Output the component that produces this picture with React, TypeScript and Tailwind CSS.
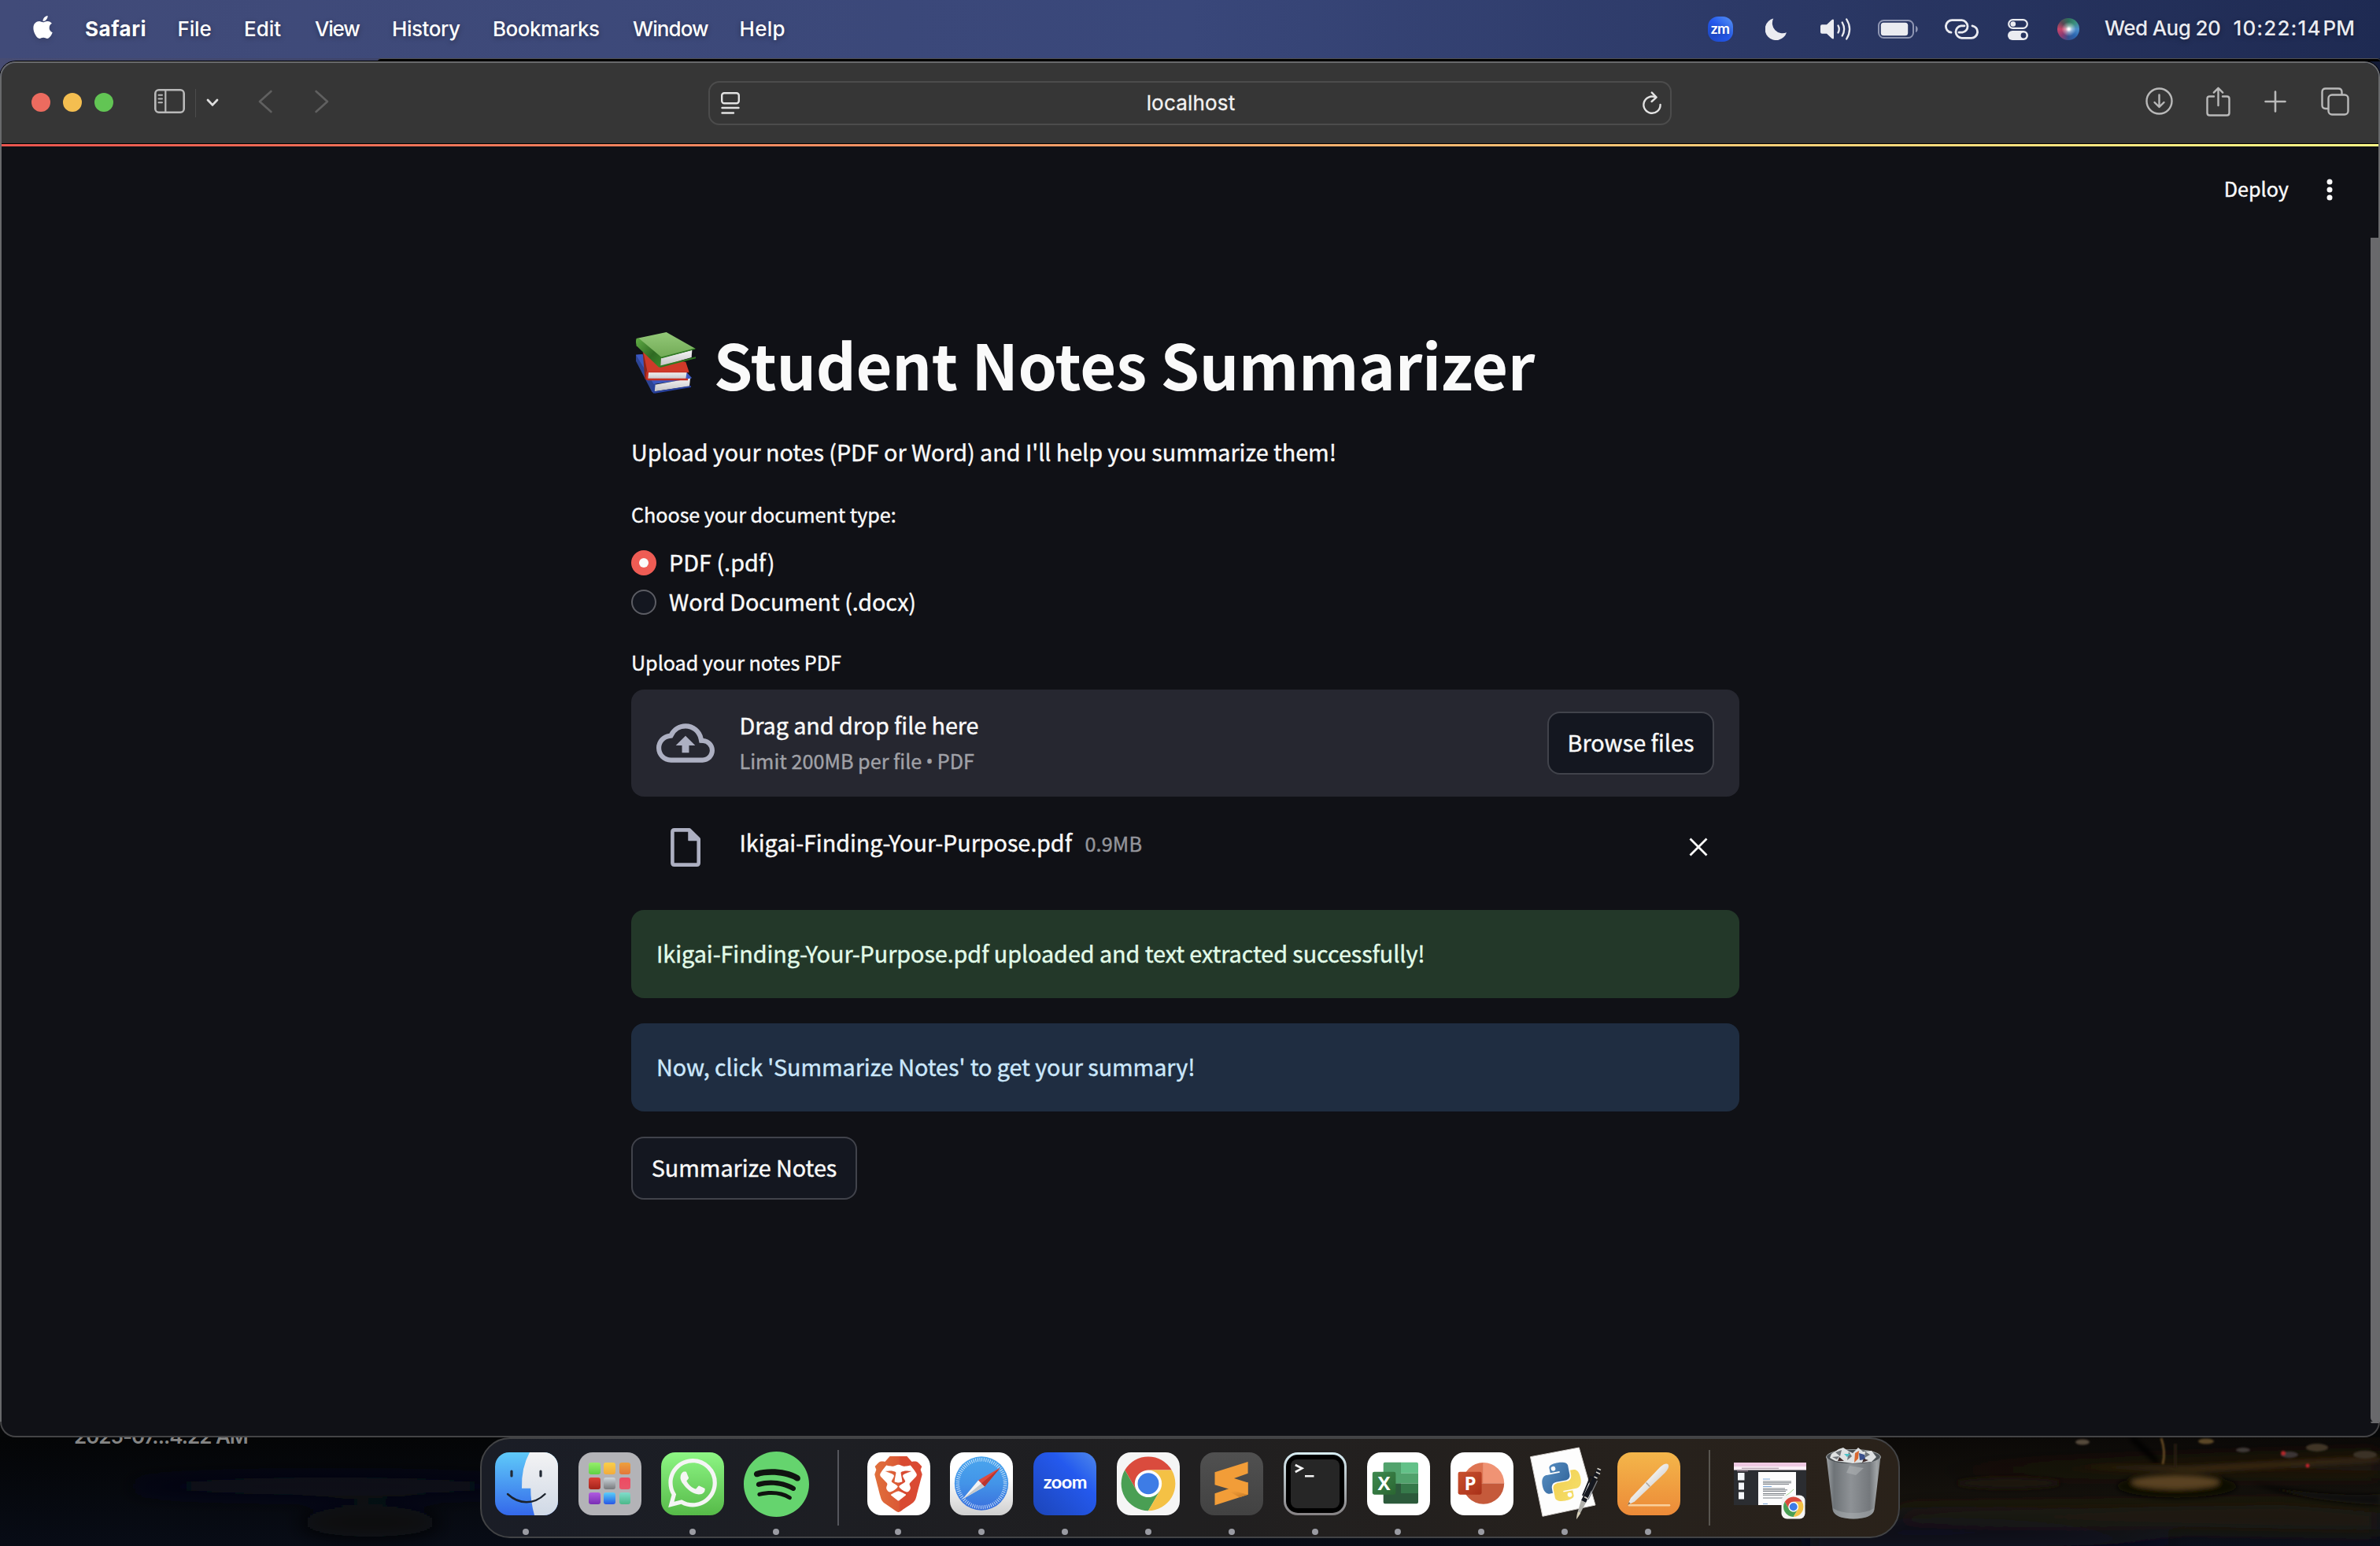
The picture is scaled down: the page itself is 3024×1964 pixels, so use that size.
import React from "react";
import { FaApple } from "react-icons/fa";
import { SiBrave, SiSpotify, SiWhatsapp } from "react-icons/si";

/* ---------- Menu bar ---------- */

const menus = [
  { label: "File", cls: "w-[84.5px] tracking-[-0.14px]" },
  { label: "Edit", cls: "w-[90px]" },
  { label: "View", cls: "w-[98px] tracking-[-1.2px]" },
  { label: "History", cls: "w-[128px] tracking-[-0.45px]" },
  { label: "Bookmarks", cls: "w-[178px] tracking-[-0.48px]" },
  { label: "Window", cls: "w-[135.5px] tracking-[-0.9px]" },
  { label: "Help", cls: "tracking-[0.27px]" },
];

function MenuBar() {
  return (
    <div className="flex h-[74px] shrink-0 items-center bg-linear-to-r from-[#414b79] via-[#39477a] to-[#1e2a52] pr-8 text-[26px] font-medium text-white [text-shadow:0_2px_6px_rgba(0,0,0,0.35)]">
      <FaApple className="ml-[39px] mt-[-5px] h-[33px] w-[31px] drop-shadow-md" />
      <div className="ml-[38px] mt-[-1px] flex">
        <span className="w-[117.5px] font-bold tracking-[0.53px]">Safari</span>
        {menus.map((m) => (
          <span key={m.label} className={m.cls}>
            {m.label}
          </span>
        ))}
      </div>
      <div className="ml-auto flex items-center whitespace-nowrap text-[#ebecf1]">
        <div className="flex h-8 w-8 items-center justify-center rounded-[13px] bg-linear-to-bl from-[#5a92f2] via-[#2559ee] to-[#1d49c4] font-['Lato'] text-[19px] font-bold leading-none tracking-[-0.5px] text-white">
          <span className="mt-[-4px]">zm</span>
        </div>
        <svg className="ml-[41px]" width="27" height="28" viewBox="0 0 27 28">
          <path d="M10.2 0.5A14 14 0 1 0 27 18.2A13 13 0 0 1 10.2 0.5Z" fill="currentColor" />
        </svg>
        <svg className="ml-[43px]" width="39" height="28" viewBox="0 0 39 28" fill="none">
          <path d="M2 8.2H8L14.4 2.2Q17 0.4 17 3V25Q17 27.6 14.4 25.8L8 19.8H2Q0 19.8 0 17.8V10.2Q0 8.2 2 8.2Z" fill="currentColor" />
          <g stroke="currentColor" strokeWidth="2.3" strokeLinecap="round">
            <path d="M22.5 9.5Q25 14 22.5 18.5" />
            <path d="M27.7 5.5Q32.6 14 27.7 22.5" />
            <path d="M33.2 1.5Q41 14 33.2 26.5" />
          </g>
        </svg>
        <svg className="ml-[34px]" width="51" height="24" viewBox="0 0 51 24" fill="none">
          <rect x="1" y="1" width="44" height="22" rx="6.5" stroke="#8f96b3" strokeWidth="2" />
          <rect x="3.8" y="3.8" width="34.4" height="16.4" rx="3.5" fill="currentColor" />
          <path d="M48 7.7C51.6 9.3 51.6 14.7 48 16.3Z" fill="#8f96b3" />
        </svg>
        <svg className="ml-[34px]" width="43" height="26" viewBox="0 0 43 26" fill="none" stroke="currentColor" strokeWidth="2.8" strokeLinecap="round">
          <path d="M8 17.2A7.8 7.8 0 0 1 9.5 1.7H21.5A7.8 7.8 0 0 1 22.4 17.2H18" />
          <path d="M35 8.8A7.8 7.8 0 0 1 33.5 24.3H21.5A7.8 7.8 0 0 1 20.6 8.8H25" />
        </svg>
        <svg className="ml-[37px]" width="26" height="27" viewBox="0 0 26 27" fill="none">
          <rect x="1.2" y="1.2" width="23.6" height="10.6" rx="5.3" stroke="currentColor" strokeWidth="2.2" />
          <circle cx="6.8" cy="6.5" r="3.3" fill="currentColor" />
          <rect x="0" y="15" width="26" height="12" rx="6" fill="currentColor" />
          <circle cx="20" cy="21" r="3.4" fill="#26335f" />
        </svg>
        <div className="relative ml-[37px] h-7 w-7 overflow-hidden rounded-full bg-[conic-gradient(from_0deg,#2e6f5c,#3a8f7c,#4b8ecb,#2b66b0,#35508f,#8a3a72,#c9466a,#5d4754,#2e6f5c)]">
          <div className="absolute inset-0 rounded-full bg-[radial-gradient(circle_at_52%_50%,#ffffff_5%,rgba(255,255,255,0.45)_20%,rgba(255,255,255,0)_45%)]" />
        </div>
        <span className="ml-[32.5px] mt-[-3px] w-[163.5px] tracking-[-0.58px]">Wed Aug 20</span>
        <span className="mt-[-3px] tracking-[1.1px]">10:22:14</span>
        <span className="ml-[2px] mt-[-3px] tracking-[0px]">PM</span>
      </div>
    </div>
  );
}

/* ---------- Safari window ---------- */

function Toolbar() {
  return (
    <div className="flex h-[102px] shrink-0 items-center bg-[#363636] text-[#b9b9b9]">
      <div className="ml-[38px] mt-[-2px] flex gap-4">
        <i className="h-6 w-6 rounded-full bg-[#ec6b5f]" />
        <i className="h-6 w-6 rounded-full bg-[#f4be50]" />
        <i className="h-6 w-6 rounded-full bg-[#62c554]" />
      </div>
      <svg className="ml-[52px] mt-[-5px]" width="39" height="31" viewBox="0 0 39 31" fill="none" stroke="currentColor">
        <rect x="1.3" y="1.3" width="36.4" height="28.4" rx="4.5" strokeWidth="2.6" />
        <path d="M14.3 1.5V29.5" strokeWidth="2.2" />
        <path d="M5.5 7.8H10M5.5 12.5H10M5.5 17.2H10" strokeWidth="2" strokeLinecap="round" />
      </svg>
      <div className="ml-[13px] h-9 w-px bg-[#4c4c4c]" />
      <svg className="ml-[13px] mt-[-2px]" width="16" height="11" viewBox="0 0 16 11" fill="none" stroke="#dedede" strokeWidth="2.8" strokeLinecap="round" strokeLinejoin="round">
        <path d="M2 2L8 8.4L14 2" />
      </svg>
      <svg className="ml-[50px] mt-[-4px]" width="18" height="30" viewBox="0 0 18 30" fill="none" stroke="#606060" strokeWidth="2.6" strokeLinecap="round" strokeLinejoin="round">
        <path d="M16.4 2L2 15L16.4 28" />
      </svg>
      <svg className="ml-[54px] mt-[-4px]" width="18" height="30" viewBox="0 0 18 30" fill="none" stroke="#606060" strokeWidth="2.6" strokeLinecap="round" strokeLinejoin="round">
        <path d="M1.6 2L16 15L1.6 28" />
      </svg>
      <div className="ml-[482px] mt-[-1px] flex h-14 w-[1224px] items-center rounded-[14px] border-2 border-[#4c4c4c] pl-[14px] pr-[10px]">
        <svg width="24" height="28" viewBox="0 0 24 28" fill="none" stroke="#e2e2e2" strokeWidth="2.4" strokeLinecap="round">
          <rect x="1.2" y="1.2" width="21.6" height="13" rx="3" />
          <path d="M1.5 20H22.5M1.5 26.5H16" />
        </svg>
        <span className="mx-auto text-[26px] leading-none tracking-[0.18px] text-[#f2f2f2] [-webkit-text-stroke:0.3px]">localhost</span>
        <svg width="26" height="30" viewBox="0 0 26 30" fill="none" stroke="#e2e2e2" strokeWidth="2.4" strokeLinecap="round" strokeLinejoin="round">
          <path d="M17.5 7.6A10.6 10.6 0 1 0 23.6 17" />
          <path d="M12.8 1.6L18.6 7.6L12.6 13" />
        </svg>
      </div>
      <div className="ml-[602px] mt-[-5px] flex items-center">
        <svg width="35" height="35" viewBox="0 0 35 35" fill="none" stroke="currentColor" strokeWidth="2.4" strokeLinecap="round" strokeLinejoin="round">
          <circle cx="17.5" cy="17.5" r="16" />
          <path d="M17.5 9.5V24.5M11.5 19L17.5 25L23.5 19" />
        </svg>
        <svg className="ml-[42px]" width="31" height="38" viewBox="0 0 31 38" fill="none" stroke="currentColor" strokeWidth="2.4" strokeLinecap="round" strokeLinejoin="round">
          <path d="M10 12.5H4.5Q1.5 12.5 1.5 15.5V33.5Q1.5 36.5 4.5 36.5H26.5Q29.5 36.5 29.5 33.5V15.5Q29.5 12.5 26.5 12.5H21" />
          <path d="M15.5 24V2M9.8 7.6L15.5 1.8L21.2 7.6" />
        </svg>
        <svg className="ml-[43px]" width="28" height="28" viewBox="0 0 28 28" fill="none" stroke="currentColor" strokeWidth="2.6" strokeLinecap="round">
          <path d="M14 1.5V26.5M1.5 14H26.5" />
        </svg>
        <svg className="ml-[44px]" width="36" height="36" viewBox="0 0 36 36" fill="none" stroke="currentColor" strokeWidth="2.4" strokeLinejoin="round">
          <rect x="9.5" y="9.5" width="25" height="25" rx="4.5" />
          <path d="M9.5 27H6Q1.5 27 1.5 22.5V6Q1.5 1.5 6 1.5H22Q26.5 1.5 26.5 6V9.5" />
        </svg>
      </div>
    </div>
  );
}

function Books() {
  return (
    <svg className="mt-[1px] ml-[-6px] h-[100px] w-[110px] shrink-0" viewBox="0 0 330 300">
      <defs>
        <linearGradient id="bkGreen" x1="0" y1="0" x2="0" y2="1">
          <stop offset="0" stopColor="#93c878" />
          <stop offset="1" stopColor="#71aa55" />
        </linearGradient>
        <linearGradient id="bkSpine" x1="0" y1="0" x2="1" y2="1">
          <stop offset="0" stopColor="#61ad45" />
          <stop offset="0.6" stopColor="#2f6a22" />
          <stop offset="1" stopColor="#3c8a2c" />
        </linearGradient>
        <linearGradient id="bkPages" x1="0" y1="0" x2="0" y2="1">
          <stop offset="0" stopColor="#f4f4f4" />
          <stop offset="1" stopColor="#c4c4c6" />
        </linearGradient>
      </defs>
      <path d="M36 122L60 120L110 234L105 270L96 262L36 146Z" fill="#2c4494" />
      <path d="M36 122L60 120L230 190L249 210L240 216L104 234Z" fill="#3c58c0" />
      <path d="M108 236L243 212L240 242L106 262Z" fill="url(#bkPages)" />
      <path d="M103 234L110 236L107 262L246 240L246 246L108 269Q98 268 100 256Z" fill="#27409b" />
      <path d="M62 112L72 110L80 180L78 218L70 214Z" fill="#8c251b" />
      <path d="M64 112L226 150L238 186L80 188Z" fill="#cf3a29" />
      <path d="M82 189L230 187L226 214L80 216Z" fill="url(#bkPages)" />
      <path d="M76 186H238V190H84L82 212H234V220H80Q74 218 74 210Z" fill="#c52f22" />
      <path d="M38 60L152 36L262 98L130 134Z" fill="url(#bkGreen)" />
      <path d="M38 60Q34 70 38 88L124 170Q134 170 134 132L48 60Z" fill="url(#bkSpine)" />
      <path d="M132 134L250 104L248 132L130 166Z" fill="url(#bkPages)" />
      <path d="M130 131L262 97V101L134 136ZM126 164L264 130V136L128 171Z" fill="#2f7a22" />
    </svg>
  );
}

function RadioRow({ label, checked, cls }: { label: string; checked?: boolean; cls: string }) {
  return (
    <div className="flex h-[50px] items-center">
      <span
        className={
          checked
            ? "mt-[1px] flex h-8 w-8 items-center justify-center rounded-full bg-[#ee5c54]"
            : "mt-[1px] h-8 w-8 rounded-full border-2 border-[#5c5d64] bg-[#141720]"
        }
      >
        {checked && <span className="h-3 w-3 rounded-full bg-[#fafafa]" />}
      </span>
      <span className={cls}>{label}</span>
    </div>
  );
}

function StreamlitApp() {
  return (
    <div className="relative flex min-h-0 flex-1 flex-col whitespace-nowrap bg-[#101116] font-['Noto_Sans_CJK_SC',sans-serif] text-[28.8px] text-[#fafafa] [-webkit-text-stroke:0.4px]">
      <div className="h-[3px] shrink-0 bg-linear-to-r from-[#ea554f] via-[#f4a76c] to-[#fffb87]" />
      <div className="mt-[33px] flex h-10 items-center justify-end pr-[58px]">
        <span className="text-[25.2px] leading-[40px]">Deploy</span>
        <svg className="ml-[48px] mt-[4px]" width="8" height="28" viewBox="0 0 8 28" fill="currentColor">
          <circle cx="4" cy="4" r="3.5" />
          <circle cx="4" cy="14" r="3.5" />
          <circle cx="4" cy="24" r="3.5" />
        </svg>
      </div>

      <main className="ml-[800px] mt-[150px] flex w-[1408px] flex-col">
        <div className="flex h-[106px]">
          <Books />
          <h1 className="ml-[0.7px] text-[79.3px] font-bold leading-[106px] tracking-[-0.32px] [-webkit-text-stroke:0px]">Student Notes Summarizer</h1>
        </div>
        <p className="mt-[35px] leading-[48px] tracking-[-0.07px]">Upload your notes (PDF or Word) and I'll help you summarize them!</p>
        <p className="mt-[35px] text-[25.2px] leading-[40px] tracking-[-0.06px]">Choose your document type:</p>
        <div className="mt-4 flex flex-col">
          <RadioRow checked label="PDF (.pdf)" cls="ml-4" />
          <RadioRow label="Word Document (.docx)" cls="ml-4 tracking-[-0.12px]" />
        </div>
        <p className="mt-8 text-[25.2px] leading-[40px] tracking-[-0.06px]">Upload your notes PDF</p>

        <div className="mt-[15px] flex h-[136px] items-center rounded-2xl bg-[#262730] px-8">
          <svg className="h-[74px] w-[74px] text-[#adb0c2]" viewBox="0 0 24 24" fill="currentColor">
            <path d="M19.35 10.04A7.49 7.49 0 0 0 12 4C9.11 4 6.6 5.64 5.35 8.04A5.994 5.994 0 0 0 0 14c0 3.31 2.69 6 6 6h13c2.76 0 5-2.24 5-5 0-2.64-2.05-4.78-4.65-4.96zM19 18H6c-2.21 0-4-1.79-4-4 0-2.05 1.53-3.76 3.56-3.97l1.07-.11.5-.95A5.469 5.469 0 0 1 12 6c2.62 0 4.88 1.86 5.39 4.43l.3 1.5 1.53.11A2.98 2.98 0 0 1 22 15c0 1.65-1.35 3-3 3zM8 13h2.55v3h2.9v-3H16l-4-4z" />
          </svg>
          <div className="ml-[31.5px] mt-[-2px] flex flex-col">
            <span className="leading-[46px] tracking-[-0.08px]">Drag and drop file here</span>
            <span className="flex text-[25.2px] leading-[44px] text-[#a0a1a7]">
              Limit 200MB per file
              <span className="mx-[5px] font-['Open_Sans']">•</span>
              PDF
            </span>
          </div>
          <button className="ml-auto h-20 w-[212px] rounded-2xl border-2 border-[#41434b] bg-[#141720] pb-[2px]">Browse files</button>
        </div>

        <div className="flex h-[144px] items-start pl-[50px] pr-10 pt-10">
          <svg className="h-[49px] w-[38px] text-[#adb0c2]" viewBox="0 0 38 49" fill="none" stroke="currentColor" strokeWidth="4.6" strokeLinejoin="round">
            <path d="M2.4 4.8Q2.4 2.4 4.8 2.4H24L35.7 14V44.2Q35.7 46.6 33.3 46.6H4.8Q2.4 46.6 2.4 44.2Z" />
            <path d="M23 2V15.5H36L23.4 2.5Z" fill="currentColor" strokeWidth="1.5" />
          </svg>
          <span className="ml-[49.5px] mt-[-5px] leading-[46px] tracking-[-0.08px]">Ikigai-Finding-Your-Purpose.pdf</span>
          <span className="ml-[16.5px] mt-[-4px] text-[25.2px] leading-[46px] tracking-[0.15px] text-[#94959b]">0.9MB</span>
          <svg className="ml-auto mt-[12px]" width="24" height="24" viewBox="0 0 24 24" stroke="currentColor" strokeWidth="2.8">
            <path d="M1.5 1.5L22.5 22.5M22.5 1.5L1.5 22.5" />
          </svg>
        </div>

        <div className="flex h-[112px] items-center rounded-2xl bg-[#233829] px-8 pb-[3px] tracking-[-0.08px] text-[#e2fbe9]">
          Ikigai-Finding-Your-Purpose.pdf uploaded and text extracted successfully!
        </div>
        <div className="mt-8 flex h-[112px] items-center rounded-2xl bg-[#1f2d41] px-8 pb-[3px] tracking-[-0.08px] text-[#cbe7fb]">
          Now, click 'Summarize Notes' to get your summary!
        </div>
        <button className="mt-8 h-20 w-[287px] rounded-2xl border-2 border-[#41434b] bg-[#141720] pb-[2px] tracking-[-0.08px]">Summarize Notes</button>
      </main>
      <div className="absolute right-[-2px] top-[119px] h-[1505px] w-3 rounded-b-full bg-[#69696c]" />
    </div>
  );
}

/* ---------- Dock ---------- */

function ChromeLogo() {
  return (
    <>
      <path d="M24 12H44.78A24 24 0 0 0 3.22 12L13.61 30A12 12 0 0 1 24 12Z" fill="#da4b3d" />
      <path d="M34.39 30L24 48A24 24 0 0 1 3.22 12L13.61 30A12 12 0 0 0 34.39 30Z" fill="#4a9f54" />
      <path d="M34.39 30L24 48A24 24 0 0 0 44.78 12H24A12 12 0 0 1 34.39 30Z" fill="#f4c145" />
      <circle cx="24" cy="24" r="11.6" fill="#fff" />
      <circle cx="24" cy="24" r="9.4" fill="#3d7ce6" />
    </>
  );
}

function Finder() {
  return (
    <svg width="80" height="80" viewBox="0 0 80 80">
      <defs>
        <linearGradient id="fL" x1="0" y1="0" x2="0" y2="1">
          <stop offset="0" stopColor="#5fcaf9" />
          <stop offset="1" stopColor="#3468ea" />
        </linearGradient>
        <linearGradient id="fR" x1="0" y1="0" x2="0" y2="1">
          <stop offset="0" stopColor="#f3f3f4" />
          <stop offset="1" stopColor="#d0d9e6" />
        </linearGradient>
        <clipPath id="fC">
          <rect width="80" height="80" rx="18" />
        </clipPath>
      </defs>
      <g clipPath="url(#fC)">
        <rect width="80" height="80" fill="url(#fL)" />
        <path d="M44 0Q33 20 34 45.8H45.3Q45 62 50 80H80V0Z" fill="url(#fR)" />
      </g>
      <path d="M21 24V30M58 24V30" stroke="#222a35" strokeWidth="3.2" strokeLinecap="round" />
      <path d="M16 53Q27 63.3 40 63.3T63.5 53" fill="none" stroke="#1b222c" strokeWidth="2.4" strokeLinecap="round" />
    </svg>
  );
}

const launchColors = [
  "bg-linear-to-b from-[#95ee6b] to-[#5fd144]",
  "bg-linear-to-b from-[#f8cf4b] to-[#f2ab3c]",
  "bg-linear-to-b from-[#eda03c] to-[#e2773a]",
  "bg-linear-to-b from-[#dd4337] to-[#a4231b]",
  "bg-linear-to-b from-[#cfd8dd] to-[#77797c]",
  "bg-linear-to-b from-[#ee4a62] to-[#e8566a]",
  "bg-linear-to-b from-[#b05be0] to-[#7a2eb5]",
  "bg-linear-to-b from-[#5ecdf8] to-[#2c55e4]",
  "bg-linear-to-b from-[#7fdccb] to-[#4cb88a]",
];

function Launchpad() {
  return (
    <div className="grid h-20 w-20 grid-cols-[repeat(3,14.4px)] content-center justify-center gap-[4.8px] rounded-[18px] bg-[#b3b3b7] pb-px">
      {launchColors.map((c, i) => (
        <i key={i} className={`h-[14.4px] w-[14.4px] rounded-[3px] ${c}`} />
      ))}
    </div>
  );
}

function WhatsApp() {
  return (
    <div className="flex h-20 w-20 items-center justify-center rounded-[18px] bg-linear-to-b from-[#8df684] to-[#56ba48]">
      <SiWhatsapp className="mt-[-2px] h-[62px] w-[62px] text-[#f5f5f5]" />
    </div>
  );
}

function Spotify() {
  return (
    <div className="flex h-20 w-20 items-center justify-center">
      <div className="flex h-[81px] w-[81px] shrink-0 items-center justify-center rounded-full bg-[#101410]">
        <SiSpotify className="h-[83px] w-[83px] shrink-0 text-[#65d46e]" />
      </div>
    </div>
  );
}

function Brave() {
  return (
    <div className="flex h-20 w-20 items-center justify-center rounded-[18px] bg-white">
      <svg className="absolute h-0 w-0">
        <defs>
          <linearGradient id="brv" x1="0" x2="1" y1="0" y2="0">
            <stop offset="0" stopColor="#e0703c" />
            <stop offset="0.5" stopColor="#db5a36" />
            <stop offset="0.55" stopColor="#d84a31" />
            <stop offset="1" stopColor="#db4a34" />
          </linearGradient>
        </defs>
      </svg>
      <SiBrave className="h-[71px] w-[71px] fill-[url(#brv)]" />
    </div>
  );
}

function Safari() {
  return (
    <svg width="80" height="80" viewBox="0 0 80 80">
      <defs>
        <linearGradient id="sfB" x1="0" y1="0" x2="0" y2="1">
          <stop offset="0.4" stopColor="#ffffff" />
          <stop offset="1" stopColor="#cfcfcf" />
        </linearGradient>
        <linearGradient id="sfC" x1="0" y1="0" x2="0" y2="1">
          <stop offset="0" stopColor="#4aa6ee" />
          <stop offset="0.5" stopColor="#4394e8" />
          <stop offset="1" stopColor="#3a6fdd" />
        </linearGradient>
      </defs>
      <rect width="80" height="80" rx="18" fill="url(#sfB)" />
      <circle cx="40" cy="39.5" r="34.2" fill="url(#sfC)" />
      <circle cx="40" cy="39.5" r="30.2" fill="none" stroke="#e9f3fc" strokeOpacity="0.85" strokeWidth="4.6" strokeDasharray="0.9 1.735" />
      <path d="M64 19.5L44 43.5L36 35.5Z" fill="#de4a3e" />
      <path d="M16 59.5L36 35.5L44 43.5Z" fill="#f3f3f3" />
      <path d="M16 59.5L40 39.5L44 43.5Z" fill="#c4c8cc" />
      <path d="M64 19.5L44 43.5L40 39.5Z" fill="#b9362f" />
    </svg>
  );
}

function Zoom() {
  return (
    <div className="flex h-20 w-20 items-center justify-center rounded-[18px] bg-linear-to-bl from-[#4f86ea] via-[#2459ee] via-35% to-[#1c45b8] font-['Lato'] text-[23.5px] font-bold leading-none tracking-[-0.5px] text-white">
      <span className="mt-[-4px]">zoom</span>
    </div>
  );
}

function Chrome() {
  return (
    <svg width="80" height="80" viewBox="0 0 80 80">
      <rect width="80" height="80" rx="18" fill="#f5f5f5" />
      <g transform="translate(5.6 5.4) scale(1.433)">
        <ChromeLogo />
      </g>
    </svg>
  );
}

function Sublime() {
  return (
    <svg width="80" height="80" viewBox="0 0 80 80">
      <defs>
        <linearGradient id="sbB" x1="0" y1="0" x2="0" y2="1">
          <stop offset="0" stopColor="#505050" />
          <stop offset="1" stopColor="#424242" />
        </linearGradient>
        <linearGradient id="sbS" x1="0" y1="0" x2="0.6" y2="1">
          <stop offset="0.3" stopColor="#f29d38" />
          <stop offset="1" stopColor="#cf8129" />
        </linearGradient>
      </defs>
      <rect width="80" height="80" rx="18" fill="url(#sbB)" />
      <path d="M60.6 38V53.7L18.5 67.3V52.3Z" fill="#f29d38" />
      <path d="M36 46.7L60.6 53.7L50 57.2L33 47.6Z" fill="url(#sbS)" />
      <path d="M60.6 12V26.7L43 33L60.6 38.6V53.7L18.5 41.3V25.3Z" fill="#f29d38" />
    </svg>
  );
}

function Terminal() {
  return (
    <div className="h-20 w-20 rounded-[18px] bg-linear-to-b from-[#d8eef5] to-[#868284] p-[3px]">
      <div className="h-full w-full rounded-[15px] bg-black p-[6px]">
        <div className="relative h-full w-full rounded-[8px] bg-[#262626]">
          <svg className="absolute left-[5px] top-[5px]" width="26" height="20" viewBox="0 0 26 20" fill="none" stroke="#f4f4f4" strokeWidth="2.6">
            <path d="M0.8 2L9.4 6.4L0.8 11M13 16.2H24.5" />
          </svg>
        </div>
      </div>
    </div>
  );
}

function Excel() {
  return (
    <svg width="80" height="80" viewBox="0 0 80 80">
      <defs>
        <linearGradient id="xlT" x1="0" y1="0" x2="1" y2="1">
          <stop offset="0" stopColor="#3f8a50" />
          <stop offset="1" stopColor="#2a6631" />
        </linearGradient>
      </defs>
      <rect width="80" height="80" rx="18" fill="#fff" />
      <path d="M22.7 12.7H43V39.7H20.7V14.7Q20.7 12.7 22.7 12.7Z" fill="#51a26c" />
      <path d="M43 12.7H63Q65 12.7 65 14.7V26.7H43Z" fill="#63c188" />
      <path d="M43 26.7H65V39.7H43Z" fill="#51a26c" />
      <path d="M20.7 39.7H43V52H20.7Z" fill="#36794a" />
      <path d="M43 39.7H65V52H43Z" fill="#36794a" />
      <path d="M20.7 39.7H43V52H65V63.3Q65 65.3 63 65.3H22.7Q20.7 65.3 20.7 63.3Z" fill="#2c5a3b" />
      <rect x="6.8" y="24.7" width="29.6" height="29" rx="2.4" fill="url(#xlT)" />
      <text x="21.6" y="48" textAnchor="middle" className="fill-white font-['Open_Sans'] text-[24px] font-bold">X</text>
    </svg>
  );
}

function PowerPoint() {
  return (
    <svg width="80" height="80" viewBox="0 0 80 80">
      <defs>
        <linearGradient id="ppT" x1="0" y1="0" x2="1" y2="1">
          <stop offset="0" stopColor="#c9512f" />
          <stop offset="1" stopColor="#a93018" />
        </linearGradient>
      </defs>
      <rect width="80" height="80" rx="18" fill="#fff" />
      <path d="M15.4 39.3A26.4 26.4 0 0 0 68.2 39.3Z" fill="#c55a3b" />
      <path d="M15.4 39.3A26.4 26.4 0 0 1 41.8 12.9V39.3Z" fill="#de7452" />
      <path d="M68.2 39.3A26.4 26.4 0 0 0 41.8 12.9V39.3Z" fill="#f09374" />
      <rect x="9.6" y="24.7" width="30" height="29" rx="2.4" fill="url(#ppT)" />
      <text x="25" y="48" textAnchor="middle" className="fill-white font-['Open_Sans'] text-[24px] font-bold">P</text>
    </svg>
  );
}

const snake =
  "M14.25.18l.9.2.73.26.59.3.45.32.34.34.25.34.16.33.1.3.04.26.02.2-.01.13V8.5l-.05.63-.13.55-.21.46-.26.38-.3.31-.33.25-.35.19-.35.14-.33.1-.3.07-.26.04-.21.02H8.77l-.69.05-.59.14-.5.22-.41.27-.33.32-.27.35-.2.36-.15.37-.1.35-.07.32-.04.27-.02.21v3.06H3.17l-.21-.03-.28-.07-.32-.12-.35-.18-.36-.26-.36-.36-.35-.46-.32-.59-.28-.73-.21-.88-.14-1.05-.05-1.23.06-1.22.16-1.04.24-.87.32-.71.36-.57.4-.44.42-.33.42-.24.4-.16.36-.1.32-.05.24-.01h.16l.06.01h8.16v-.83H6.18l-.01-2.75-.02-.37.05-.34.11-.31.17-.28.25-.26.31-.23.38-.2.44-.18.51-.15.58-.12.64-.1.71-.06.77-.04.84-.02 1.27.05z";

function PythonIdle() {
  return (
    <svg className="overflow-visible" width="80" height="80" viewBox="0 0 80 80">
      <defs>
        <linearGradient id="pyB" x1="0" y1="0" x2="1" y2="1">
          <stop offset="0" stopColor="#5b93c6" />
          <stop offset="1" stopColor="#2d5f96" />
        </linearGradient>
        <linearGradient id="pyY" x1="1" y1="1" x2="0" y2="0">
          <stop offset="0" stopColor="#f3cf52" />
          <stop offset="1" stopColor="#f4e06c" />
        </linearGradient>
      </defs>
      <path d="M-4.5 5.7L57.3 -6L78 67L11 81.3Z" fill="#fdfdfd" stroke="#d6d2cf" strokeWidth="1" />
      <g transform="translate(35 37.3) rotate(-11) scale(2.05) translate(-12 -12)">
        <path d={snake} fill="url(#pyB)" />
        <path d={snake} fill="url(#pyY)" transform="rotate(180 12 12)" />
        <circle cx="8.5" cy="3.1" r="1.4" fill="#fff" />
        <circle cx="15.5" cy="20.9" r="1.4" fill="#fff" />
      </g>
      <path d="M80.5 20.5L85 22.5L66 64L60 61Z" fill="#14171f" />
      <path d="M77 33L72 31L62 55" fill="none" stroke="#14171f" strokeWidth="2" />
      <path d="M80.5 20.5L85 22.5M79 25L84 27.5M76.5 31L80.5 33M64 56.5L68.5 59" stroke="#d3cfc6" strokeWidth="1.8" />
      <path d="M80.5 36L69 60" stroke="#7d8188" strokeWidth="1.2" />
      <path d="M60 61L66 64L57.5 80L54 85L54.6 79Z" fill="#b1b0ab" />
      <path d="M56 75.5L59.4 77L54 85Z" fill="#d8cfb4" />
    </svg>
  );
}

function Pages() {
  return (
    <svg width="80" height="80" viewBox="0 0 80 80">
      <defs>
        <linearGradient id="pgB" x1="0" y1="0" x2="0" y2="1">
          <stop offset="0" stopColor="#f4b64a" />
          <stop offset="1" stopColor="#ec8a38" />
        </linearGradient>
        <linearGradient id="pgP" x1="0" y1="0" x2="1" y2="1">
          <stop offset="0.3" stopColor="#ffffff" />
          <stop offset="0.75" stopColor="#c9c5c0" />
        </linearGradient>
      </defs>
      <rect width="80" height="80" rx="18" fill="url(#pgB)" />
      <path d="M15 67.3H66" stroke="#f9cf9b" strokeWidth="2.6" strokeLinecap="round" />
      <path d="M12.8 67.2L17 58L54 19Q61 13 64.5 15.2Q67 18.5 60.5 26L22 62.5Z" fill="url(#pgP)" />
      <path d="M12.8 67.2L14.8 63L16.6 65Z" fill="#8a6a45" />
      <path d="M36.5 38.5L41.3 43.5" stroke="#a9a49d" strokeWidth="1.6" />
    </svg>
  );
}

function Preview() {
  return (
    <svg width="92" height="72" viewBox="0 0 92 72">
      <rect width="92" height="54" fill="#2b2d31" />
      <rect width="92" height="5" fill="#efc9e2" />
      <rect y="5" width="92" height="4.5" fill="#fbeef6" />
      <path d="M10 7.2H57M4 10.8H18" stroke="#a48d9d" strokeWidth="1.1" />
      <path d="M31 12H79V54H31Z" fill="#fdfdfd" />
      <g fill="#f5f7fa">
        <rect x="5" y="13" width="8.5" height="9.5" />
        <rect x="6" y="25.5" width="7" height="9" />
        <rect x="6" y="37.5" width="7" height="9" />
      </g>
      <g stroke="#7d8288" strokeWidth="1">
        <path d="M37 24H73M37 25.8H73M37 27.6H70M37 33H65M37 34.8H68M37 36.6H66M37 39.5H66M37 41.3H64M37 45H62" />
      </g>
      <path d="M37 21H46M37 30.5H48M37 52.5H43" stroke="#7ba7d8" strokeWidth="1" />
      <path d="M66 42Q70 40 76 34" stroke="#9cd389" strokeWidth="1" fill="none" />
      <rect x="60.5" y="41.5" width="30" height="30" rx="7" fill="#f5f5f5" />
      <g transform="translate(63 43.5) scale(0.53)">
        <ChromeLogo />
      </g>
    </svg>
  );
}

function Trash() {
  return (
    <svg width="70" height="92" viewBox="0 0 70 92">
      <defs>
        <linearGradient id="trB" x1="0" y1="0" x2="1" y2="0">
          <stop offset="0" stopColor="#9fa3a6" />
          <stop offset="0.14" stopColor="#6e7377" />
          <stop offset="0.45" stopColor="#8e9296" />
          <stop offset="0.8" stopColor="#74787c" />
          <stop offset="0.93" stopColor="#a0a4a6" />
          <stop offset="1" stopColor="#85898c" />
        </linearGradient>
      </defs>
      <ellipse cx="35" cy="13" rx="34.5" ry="9.5" fill="#4d5256" stroke="#a0a4a6" strokeWidth="1" />
      <path d="M7 9L16 3L22 1L28 5L34 8L41 1L47 6L58 5L64 13L58 19L34 21L12 18L5 14Z" fill="#dfe1e2" />
      <path d="M12 7L20 4L18 12ZM29 6L33 12L27 17ZM50 6L56 10L49 14ZM8 13L14 16L17 12Z" fill="#70757a" />
      <path d="M37 8L42 5L41 15L36 20Z" fill="#d8672f" />
      <path d="M42 8L49 10L50 16L43 17Z" fill="#3a4f8c" />
      <path d="M23 9L31 9L27 13Z" fill="#4fc2c9" />
      <path d="M17 13L23 18L15 18ZM48 15L54 17L46 20Z" fill="#3e2a2a" />
      <path d="M0.5 12Q4 21 35 21.5Q66 21 69.5 12L61.5 80Q59 91 35 91.5Q11 91 8.5 80Z" fill="url(#trB)" />
      <path d="M30 24L48 27L38 36L26 33Z" fill="#b4b8ba" opacity="0.5" />
      <path d="M9 78Q18 84 35 84Q52 84 61 78L60.5 82Q57 91 35 91.5Q13 91 9.5 82Z" fill="#b0b4b6" opacity="0.45" />
    </svg>
  );
}

function Slot({ children, running = true }: { children: React.ReactNode; running?: boolean }) {
  return (
    <div className="flex w-20 flex-col items-center">
      <div className="h-20 w-20">{children}</div>
      {running && <i className="mr-[1px] mt-[17px] h-2 w-2 rounded-full bg-[#9a9ba2]" />}
    </div>
  );
}

function Dock() {
  return (
    <div className="relative mx-auto flex h-[128px] w-[1804px] items-start rounded-[38px] border-2 border-[#424345] bg-linear-to-r from-[#1a1d26] via-[#201f20] to-[#2a221a] pl-[16.8px] pt-[17px]">
      <div className="flex gap-[25.8px]">
        <Slot><Finder /></Slot>
        <Slot running={false}><Launchpad /></Slot>
        <Slot><WhatsApp /></Slot>
        <Slot><Spotify /></Slot>
      </div>
      <div className="ml-[38px] mt-[-3px] h-24 w-0.5 bg-[#55565c]" />
      <div className="ml-[35.4px] flex gap-[25.9px]">
        <Slot><Brave /></Slot>
        <Slot><Safari /></Slot>
        <Slot><Zoom /></Slot>
        <Slot><Chrome /></Slot>
        <Slot><Sublime /></Slot>
        <Slot><Terminal /></Slot>
        <Slot><Excel /></Slot>
        <Slot><PowerPoint /></Slot>
        <Slot><PythonIdle /></Slot>
        <Slot><Pages /></Slot>
      </div>
      <div className="ml-[36.8px] mt-[-3px] h-24 w-0.5 bg-[#58554f]" />
      <div className="ml-[29.5px] mt-[13px]"><Preview /></div>
      <div className="ml-[25px] mt-[-7px]"><Trash /></div>
    </div>
  );
}

/* ---------- Desktop ---------- */

function Wallpaper() {
  return (
    <svg className="absolute inset-0" width="3024" height="138" viewBox="0 0 3024 138" preserveAspectRatio="none">
      <defs>
        <linearGradient id="wpL" x1="0" y1="0" x2="0" y2="1">
          <stop offset="0" stopColor="#040506" />
          <stop offset="1" stopColor="#080c16" />
        </linearGradient>
        <linearGradient id="wpR" x1="0" y1="0" x2="0" y2="1">
          <stop offset="0" stopColor="#0b0907" />
          <stop offset="0.6" stopColor="#15120d" />
          <stop offset="1" stopColor="#0b0f1c" />
        </linearGradient>
        <filter id="wpF" x="-20%" y="-80%" width="140%" height="260%">
          <feGaussianBlur stdDeviation="12" />
        </filter>
        <filter id="wpG" x="-20%" y="-80%" width="140%" height="260%">
          <feGaussianBlur stdDeviation="3" />
        </filter>
        <filter id="wpH" x="-20%" y="-80%" width="140%" height="260%">
          <feGaussianBlur stdDeviation="1.2" />
        </filter>
      </defs>
      <rect width="3024" height="138" fill="url(#wpL)" />
      <rect x="2300" width="724" height="138" fill="url(#wpR)" />
      <g filter="url(#wpF)">
        <ellipse cx="420" cy="62" rx="260" ry="12" fill="#090d1a" />
        <ellipse cx="470" cy="108" rx="90" ry="18" fill="#090b0a" />
        <path d="M2450 42L3024 24V44L2600 44Z" fill="#2c1f0e" />
        <path d="M2420 92L2900 86L3024 95V118L2700 112L2400 104Z" fill="#231b10" />
        <path d="M2300 110Q2560 96 2780 138H2300Z" fill="#0d111f" />
      </g>
      <g filter="url(#wpG)">
        <path d="M2640 37H2780L3024 25V30L2790 44Z" fill="#3a2a14" />
        <ellipse cx="2552" cy="58" rx="66" ry="7" fill="#1f180d" />
        <ellipse cx="2766" cy="62" rx="76" ry="15" fill="#080805" />
        <ellipse cx="2764" cy="57" rx="56" ry="9" fill="#5a4320" />
        <path d="M2860 58Q2950 76 3024 72V86Q2930 82 2860 58Z" fill="#0d0b07" />
        <path d="M2708 0L2742 32" stroke="#030303" strokeWidth="7" />
      </g>
      <g filter="url(#wpH)">
        <path d="M2746 1Q2752 18 2748 34" stroke="#6d5026" strokeWidth="2.5" fill="none" />
        <path d="M2764 8V38" stroke="#2c1f10" strokeWidth="3" />
        <ellipse cx="2646" cy="6" rx="9" ry="3.5" fill="#55483a" />
        <ellipse cx="2803" cy="5" rx="10" ry="3.5" fill="#5a4628" />
        <ellipse cx="2850" cy="16" rx="9" ry="3" fill="#3d3836" />
        <ellipse cx="2909" cy="22" rx="11" ry="4" fill="#3a3436" />
        <ellipse cx="2944" cy="13" rx="14" ry="5" fill="#3f3527" />
        <ellipse cx="3005" cy="22" rx="15" ry="5" fill="#3b3328" />
        <circle cx="2901" cy="20" r="2.8" fill="#b8262a" />
        <circle cx="2932" cy="36" r="2.4" fill="#c8232c" />
      </g>
    </svg>
  );
}

export default function App() {
  return (
    <div className="flex h-[1964px] w-[3024px] flex-col overflow-hidden bg-[#05070a] font-['Inter',sans-serif]">
      <MenuBar />
      <div className="flex flex-col bg-linear-to-r from-[#474c72] to-[#121a35]">
        <div className="ml-[480px] h-1 rounded-t-full border-t border-[#4f4f4f] bg-black" />
        <div className="flex h-[1748px] w-full shrink-0 flex-col overflow-hidden rounded-t-[20px] border-2 border-b-0 border-[#68696b] shadow-[0_0_0_1px_#000]">
          <Toolbar />
          <div className="h-px shrink-0 bg-black" />
          <StreamlitApp />
        </div>
      </div>
      <div className="relative z-10 mt-[-20px] h-5 bg-[#050607]">
        <div className="h-5 rounded-b-[20px] border-2 border-t-0 border-[#444446] bg-[#101116]">
          <div className="ml-auto mr-[-2px] h-0.5 w-3 rounded-b-full bg-[#69696c]" />
        </div>
      </div>
      <div className="relative h-[138px] shrink-0 overflow-hidden">
        <Wallpaper />
        <span className="absolute left-[94px] top-[-17px] text-[26px] font-semibold leading-[32px] tracking-[-1px] text-[#858585]">2025-07...4.22 AM</span>
        <Dock />
      </div>
    </div>
  );
}
